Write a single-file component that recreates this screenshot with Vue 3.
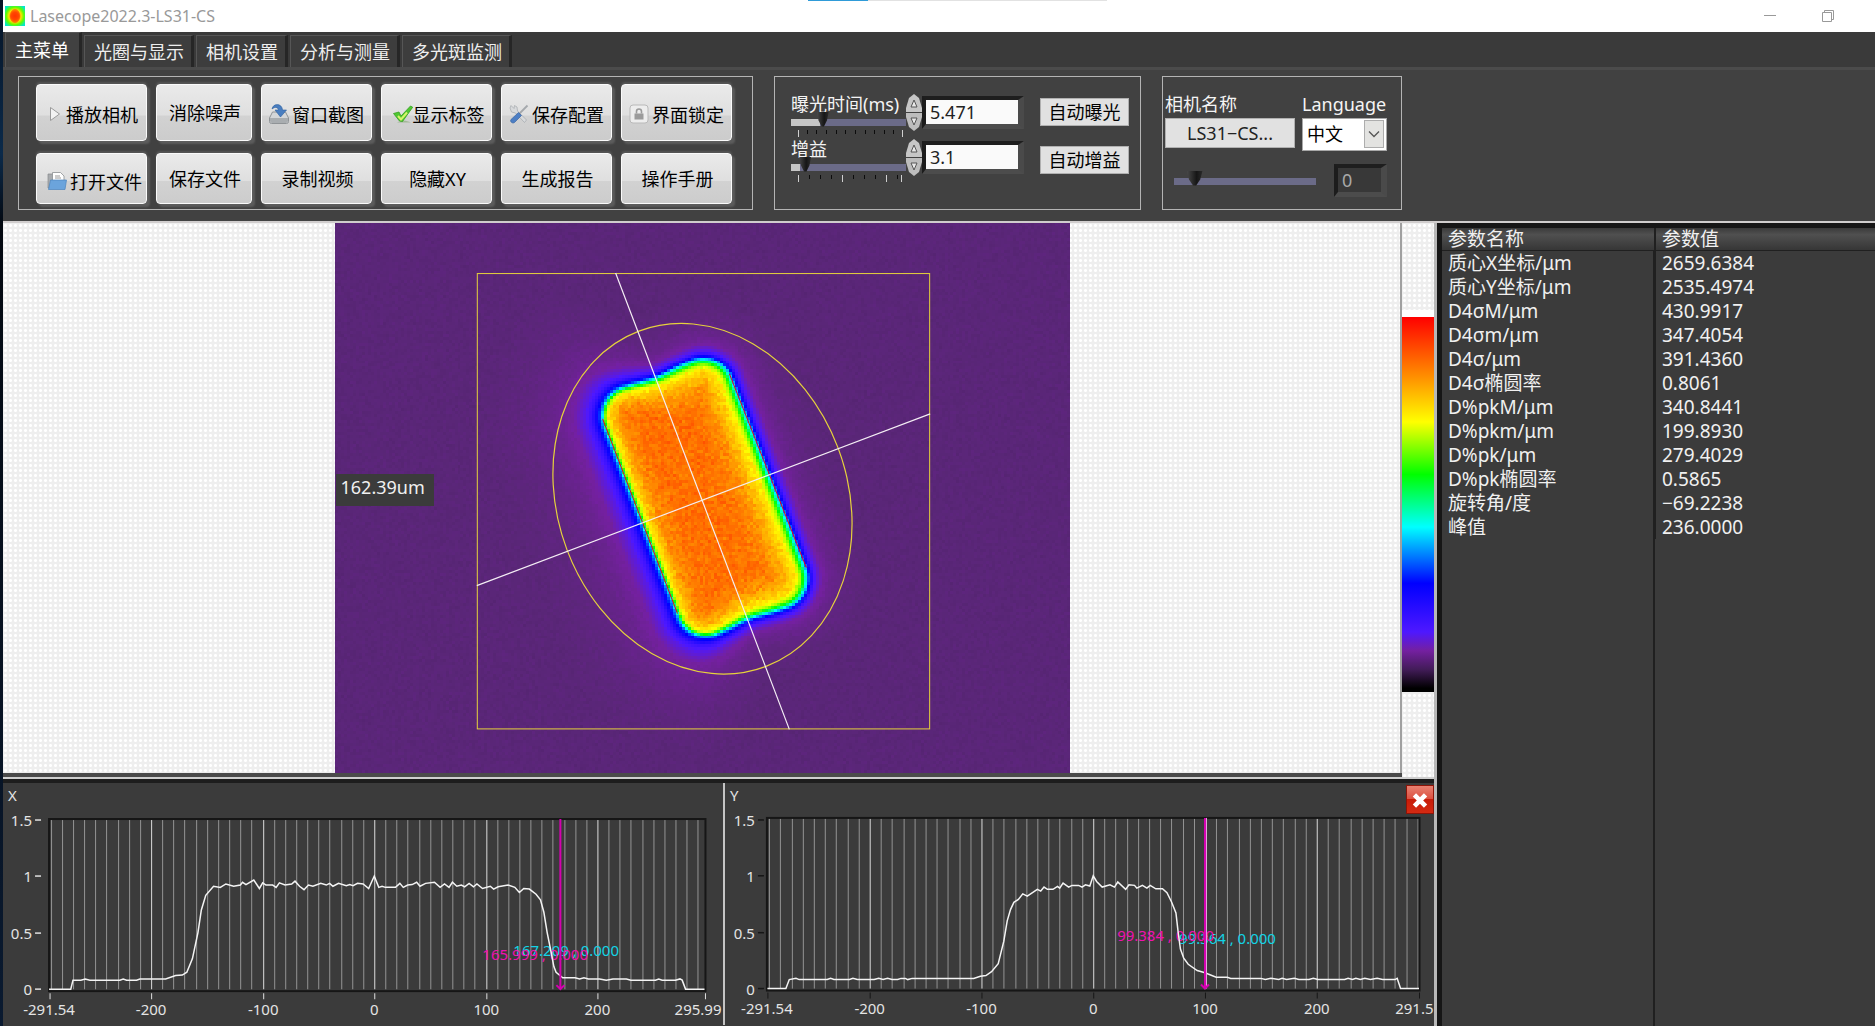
<script setup>
import { computed, onMounted, ref } from 'vue'

const tabs = ['主菜单', '光圈与显示', '相机设置', '分析与测量', '多光斑监测']
const activeTab = ref('主菜单')

const actions = [
  { label: '播放相机', icon: 'play' },
  { label: '消除噪声' },
  { label: '窗口截图', icon: 'capture' },
  { label: '显示标签', icon: 'check' },
  { label: '保存配置', icon: 'tools' },
  { label: '界面锁定', icon: 'lock' },
  { label: '打开文件', icon: 'folder' },
  { label: '保存文件' },
  { label: '录制视频' },
  { label: '隐藏XY' },
  { label: '生成报告' },
  { label: '操作手册' },
]

const controls = ref([
  {
    id: 'exposure',
    label: '曝光时间(ms)',
    value: '5.471',
    pos: 25,
    auto: '自动曝光',
    major: [7, 111],
    minor: [16, 25, 35, 45, 54, 64, 74, 83, 93, 102],
  },
  {
    id: 'gain',
    label: '增益',
    value: '3.1',
    pos: 8,
    auto: '自动增益',
    major: [7, 51, 95, 110],
    minor: [18, 29, 40, 62, 73, 84, 106],
  },
])
const language = ref('中文')
const cameraPos = ref(10)
const cameraValue = ref('0')

const params = [
  ['质心X坐标/μm', '2659.6384'],
  ['质心Y坐标/μm', '2535.4974'],
  ['D4σM/μm', '430.9917'],
  ['D4σm/μm', '347.4054'],
  ['D4σ/μm', '391.4360'],
  ['D4σ椭圆率', '0.8061'],
  ['D%pkM/μm', '340.8441'],
  ['D%pkm/μm', '199.8930'],
  ['D%pk/μm', '279.4029'],
  ['D%pk椭圆率', '0.5865'],
  ['旋转角/度', '−69.2238'],
  ['峰值', '236.0000'],
]

// ---- beam image ----
const CELL = 3
const COLS = 246
const ROWS = 184
const beam = ref(null)

// level -> rgb, same stops as the colour bar
const palette = [
  [0, 0, 0, 0],
  [0.06, 66, 28, 88],
  [0.083, 90, 38, 120],
  [0.107, 116, 32, 160],
  [0.16, 78, 24, 255],
  [0.285, 0, 0, 255],
  [0.437, 0, 255, 255],
  [0.576, 0, 255, 0],
  [0.72, 255, 255, 0],
  [0.84, 255, 144, 0],
  [1, 255, 0, 0],
]
// distance outside / inside the beam edge -> level
const outside = [
  [0, 0.38],
  [2, 0.28],
  [5, 0.19],
  [8, 0.15],
  [14, 0.108],
  [22, 0.096],
  [36, 0.088],
  [60, 0.083],
]
const inside = [
  [0, 0.38],
  [3, 0.54],
  [6, 0.67],
  [10, 0.74],
  [17, 0.79],
  [26, 0.84],
  [44, 0.875],
]

function lerp(stops, x) {
  if (x <= stops[0][0]) return stops[0].slice(1)
  for (let i = 1; i < stops.length; i++) {
    const a = stops[i - 1]
    const b = stops[i]
    if (x <= b[0]) {
      const k = (x - a[0]) / (b[0] - a[0])
      return a.slice(1).map((n, j) => n + (b[j + 1] - n) * k)
    }
  }
  return stops[stops.length - 1].slice(1)
}

function noise(seed) {
  let s = seed
  return () => {
    s = (s * 1664525 + 1013904223) >>> 0
    return s / 4294967296 - 0.5
  }
}

function level(x, y) {
  const dx = x - 368
  const dy = y - 276
  const u = dx * 0.362 + dy * 0.932
  const v = dx * 0.932 - dy * 0.362
  // short ends are slightly hollow in the middle
  const half = 133 - 3 * Math.exp(-((v / 22) ** 2))
  const r = 31
  const qx = Math.abs(v - 3) - (69 - r)
  const qy = Math.abs(u) - (half - r)
  const d = Math.hypot(Math.max(qx, 0), Math.max(qy, 0)) + Math.min(Math.max(qx, qy), 0) - r
  const side = Math.max(-1, Math.min(1, v / 68))
  if (d > 0) return lerp(outside, side < 0 ? d / (1 - side) : d)[0]
  return lerp(inside, side > 0 ? -d / (1 + side * 0.3) : -d * (1 - side * 0.6))[0]
}

onMounted(() => {
  const ctx = beam.value.getContext('2d')
  const img = ctx.createImageData(COLS, ROWS)
  const rnd = noise(31)
  for (let r = 0; r < ROWS; r++) {
    for (let c = 0; c < COLS; c++) {
      const base = level(c * CELL + 1, r * CELL + 1)
      const n = rnd() + rnd()
      const [R, G, B] = lerp(palette, base + n * (base > 0.7 ? 0.036 : 0.004))
      img.data.set([R, G, B, 255], (r * COLS + c) * 4)
    }
  }
  ctx.putImageData(img, 0, 0)
})

// ---- profile plots ----
const profileX = [
  -291.5, 0, -272, 0, -270, 0.08, -263, 0.08, -259, 0.09, -255, 0.08, -228, 0.08, -225, 0.09, -222, 0.08,
  -213, 0.08, -210, 0.09, -187, 0.09, -178, 0.12, -172, 0.125, -168, 0.15, -163, 0.27, -158, 0.5, -155, 0.7,
  -151, 0.83, -144, 0.91, -138, 0.9, -133, 0.93, -126, 0.91, -120, 0.92, -118, 0.945, -115, 0.925,
  -108, 0.965, -103, 0.89, -100, 0.94, -97, 0.92, -91, 0.92, -88, 0.9, -85, 0.94, -80, 0.92, -74, 0.93,
  -71, 0.955, -67, 0.91, -63, 0.88, -59, 0.92, -55, 0.91, -48, 0.935, -43, 0.92, -40, 0.935, -37, 0.91,
  -32, 0.935, -25, 0.915, -22, 0.925, -19, 0.915, -15, 0.935, -10, 0.93, -5, 0.89, 0, 1, 4, 0.9, 7, 0.91,
  10, 0.9, 19, 0.9, 23, 0.935, 26, 0.9, 30, 0.92, 34, 0.925, 38, 0.945, 41, 0.91, 46, 0.935, 54, 0.945,
  59, 0.9, 63, 0.93, 67, 0.9, 70, 0.945, 74, 0.91, 78, 0.92, 81, 0.905, 85, 0.935, 89, 0.905, 92, 0.93,
  97, 0.89, 104, 0.91, 107, 0.885, 111, 0.905, 120, 0.92, 126, 0.9, 130, 0.855, 134, 0.89, 139, 0.885,
  145, 0.84, 149, 0.79, 152, 0.68, 155, 0.5, 158, 0.35, 161, 0.2, 163, 0.15, 169, 0.1, 180, 0.1, 184, 0.09,
  188, 0.1, 192, 0.09, 202, 0.09, 208, 0.08, 214, 0.09, 226, 0.09, 230, 0.08, 252, 0.08, 255, 0.09,
  258, 0.08, 270, 0.08, 274, 0.09, 276, 0.08, 279, 0, 296, 0,
]
const profileY = [
  -291.5, 0, -275, 0, -272, 0.08, -266, 0.09, -263, 0.08, -238, 0.08, -235, 0.09, -232, 0.08, -218, 0.08,
  -215, 0.09, -211, 0.08, -196, 0.08, -192, 0.09, -188, 0.08, -184, 0.09, -180, 0.08, -175, 0.08,
  -172, 0.09, -168, 0.09, -166, 0.08, -162, 0.09, -107, 0.09, -101, 0.11, -96, 0.115, -91, 0.15,
  -85, 0.22, -80, 0.42, -77, 0.6, -74, 0.7, -71, 0.765, -67, 0.79, -63, 0.84, -59, 0.82, -50, 0.88,
  -47, 0.865, -44, 0.9, -41, 0.88, -36, 0.88, -32, 0.905, -30, 0.89, -27, 0.935, -22, 0.9, -19, 0.915,
  -13, 0.915, -10, 0.9, -7, 0.92, -3, 0.91, 0, 1, 3, 0.95, 8, 0.9, 15, 0.92, 19, 0.9, 22, 0.945, 29, 0.88,
  32, 0.92, 37, 0.915, 39, 0.89, 44, 0.915, 48, 0.89, 51, 0.915, 56, 0.885, 62, 0.885, 66, 0.85, 70, 0.77,
  74, 0.67, 76, 0.5, 78, 0.35, 81, 0.27, 85, 0.215, 93, 0.16, 100, 0.14, 110, 0.1, 120, 0.1, 123, 0.09,
  150, 0.09, 154, 0.08, 159, 0.09, 166, 0.08, 169, 0.09, 173, 0.08, 180, 0.09, 184, 0.08, 193, 0.08,
  197, 0.09, 201, 0.08, 225, 0.08, 228, 0.09, 232, 0.08, 235, 0.09, 239, 0.08, 243, 0.09, 248, 0.08,
  254, 0.09, 259, 0.08, 270, 0.08, 272, 0.09, 275, 0, 291.5, 0,
]

const plots = computed(() =>
  [
    {
      axis: 'X', w: 719, h: 241, left: 46, right: 702, zero: 371, scale: 1.115, top: 35, base: 205,
      points: profileX, last: '295.99', lastX: 718, labelX: 29, tick: '#e0e0e0', cursor: 557, glow: false,
      notes: [
        { text: '167.209 , 0.000', x: 510, y: 172, cls: 'cyan' },
        { text: '165.999 , 0.000', x: 479, y: 176, cls: 'pink' },
      ],
    },
    {
      axis: 'Y', w: 711, h: 241, left: 42, right: 696, zero: 369, scale: 1.12, top: 34, base: 205,
      points: profileY, last: '291.5', lastX: 710, labelX: 30, tick: '#161616', cursor: 481, glow: true,
      notes: [
        { text: '99.364 , 0.000', x: 455, y: 160, cls: 'cyan' },
        { text: '99.384 , 0.000', x: 393, y: 157, cls: 'pink' },
      ],
    },
  ].map((p) => {
    const px = (v) => p.zero + v * p.scale
    const py = (v) => p.base - v * 113
    const grid = []
    for (let v = -290; v <= 290; v += 10) grid.push({ x: Math.round(px(v)) + 0.5, major: v % 100 === 0 })
    const line = []
    for (let i = 0; i < p.points.length; i += 2) {
      line.push(`${px(p.points[i]).toFixed(1)},${py(p.points[i + 1]).toFixed(1)}`)
    }
    return {
      ...p,
      grid,
      line: line.join(' '),
      xTicks: [-200, -100, 0, 100, 200].map((v) => ({ v, x: Math.round(px(v)) })),
      yTicks: [0, 0.5, 1, 1.5].map((v) => ({ v, y: Math.round(py(v)) })),
    }
  }),
)
const showPlots = ref(true)
</script>

<template>
  <div class="app">
    <div class="window">
      <header class="titlebar">
        <svg class="logo" viewBox="0 0 20 20">
          <defs>
            <radialGradient id="logo-spot" cx="50%" cy="50%" r="62%">
              <stop offset="0" stop-color="#ff2a00" />
              <stop offset="0.3" stop-color="#ff5a00" />
              <stop offset="0.5" stop-color="#ffe000" />
              <stop offset="0.72" stop-color="#5cff00" />
              <stop offset="1" stop-color="#00e6d0" />
            </radialGradient>
          </defs>
          <rect width="20" height="20" fill="url(#logo-spot)" />
          <ellipse cx="10" cy="10" rx="5" ry="7" fill="#ff3c00" opacity="0.6" />
        </svg>
        <h1 class="title">Lasecope2022.3-LS31-CS</h1>
        <div class="progress"></div>
        <div class="win-buttons">
          <button class="win-btn" aria-label="最小化">
            <svg viewBox="0 0 12 12"><path d="M0 5.500h12" /></svg>
          </button>
          <button class="win-btn" aria-label="还原">
            <svg viewBox="0 0 12 12"><path d="M.5 2.500h9v9h-9zM2.500 2.500v-2h9v9h-2" /></svg>
          </button>
        </div>
      </header>

      <nav class="tabs">
        <button
          v-for="t in tabs"
          :key="t"
          class="tab"
          :class="{ on: activeTab === t }"
          @click="activeTab = t"
        >
          {{ t }}
        </button>
      </nav>

      <section class="ribbon">
        <div class="group actions">
          <button v-for="a in actions" :key="a.label" class="action" :class="a.icon && ['has-icon', a.icon]">
            <svg v-if="a.icon === 'play'" class="ico narrow" viewBox="0 0 12 20">
              <path d="M1.500 3.500v13l9-6.500z" fill="#f2f2f2" stroke="#9a9a9a" />
            </svg>
            <svg v-else-if="a.icon === 'capture'" class="ico" viewBox="0 0 20 20">
              <path d="M3.500 8h13l3 6v3.500q0 2-2 2h-15q-2 0-2-2V14z" fill="#d4d6d8" stroke="#8f9396" />
              <path d="M1 14h18v3q0 2-2 2H3q-2 0-2-2z" fill="#a9adb0" />
              <path d="M3 5C4-1 13-1 13.500 6H17.500L11.500 13 6 6h3.500C9 3 6 2.500 3 5z" fill="#4a7ec0" stroke="#2e5f9e" stroke-width=".6" />
            </svg>
            <svg v-else-if="a.icon === 'check'" class="ico" viewBox="0 0 20 20">
              <path d="M4 18.500c4-2.500 9-2.500 14 0z" fill="#8fae80" opacity=".7" />
              <path d="M.5 9.500L6 8l2 4L17.500 2l2.200 1.200L9.500 17.500 6.500 17z" fill="#4fc832" stroke="#35a01e" stroke-width=".8" />
              <path d="M5 12l3 3.500L14 8.500" fill="none" stroke="#d6f56a" stroke-width="2" />
            </svg>
            <svg v-else-if="a.icon === 'tools'" class="ico" viewBox="0 0 20 20">
              <path d="M2 1.500l3 3 .5-3L8 3l.5 4 9 9-2 2.500-9-9.500-4-1L1 4z" fill="#d8dadc" stroke="#a4a8ac" stroke-width=".7" />
              <path d="M18.500 1.500L10 10" stroke="#a4a8ac" stroke-width="1.800" />
              <path d="M9.500 8.500l3 3-7 7c-2 1.500-5-1-3.500-3z" fill="#4c7ec4" stroke="#2f5c9c" stroke-width=".6" />
            </svg>
            <svg v-else-if="a.icon === 'lock'" class="ico" viewBox="0 0 20 20">
              <rect x="1" y="1" width="18" height="18" rx="3" fill="#ededed" stroke="#b9b9b9" />
              <path d="M5.500 9.500h9v6h-9z" fill="#9b9b9b" />
              <path d="M7.500 9.500V7.500a2.500 2.500 0 0 1 5 0v2" fill="none" stroke="#9b9b9b" stroke-width="1.600" />
            </svg>
            <svg v-else-if="a.icon === 'folder'" class="ico" viewBox="0 0 20 20">
              <path d="M1 3h6l1 2v12H1z" fill="#a8abae" stroke="#86898c" stroke-width=".7" />
              <path d="M5.500 1.500h8l3.500 3.500v8H5.500z" fill="#fff" stroke="#8c8f92" stroke-width=".8" />
              <path d="M8 5h5M8 7h6" stroke="#999" />
              <path d="M3.500 9H19.500L18 18.500H1.500z" fill="#6ba4dc" stroke="#4c84bd" stroke-width=".7" />
            </svg>
            <span>{{ a.label }}</span>
          </button>
        </div>

        <div class="group exposure">
          <div v-for="c in controls" :key="c.id" class="control">
            <div class="slide">
              <label class="name" :for="c.id">{{ c.label }}</label>
              <input
                :id="c.id"
                v-model="c.pos"
                class="range filled"
                type="range"
                :style="{ '--fill': c.pos + '%' }"
              />
              <svg class="ticks" viewBox="0 0 116 7">
                <path v-for="m in c.minor" :key="m" :d="`M${m}.500 0v4`" stroke="#0c0c0c" />
                <path v-for="m in c.major" :key="m" :d="`M${m}.500 0v7`" stroke="#d0d0d0" />
              </svg>
            </div>
            <div class="spin">
              <button class="step" :aria-label="c.label + ' +'">
                <svg viewBox="0 0 16 18">
                  <path d="M8 0l5 4 3 10v4H0v-4L3 4z" fill="#c6c6c6" />
                  <path d="M8 6l3 7H5z" fill="#e8e8e8" stroke="#555" />
                </svg>
              </button>
              <button class="step" :aria-label="c.label + ' -'">
                <svg viewBox="0 0 16 18">
                  <path d="M8 18l5-4 3-10V0H0v4l3 10z" fill="#bdbdbd" />
                  <path d="M8 12l3-7H5z" fill="#e8e8e8" stroke="#555" />
                </svg>
              </button>
            </div>
            <input v-model="c.value" class="number" type="text" :aria-label="c.label" />
            <button class="flat">{{ c.auto }}</button>
          </div>
        </div>

        <div class="group camera">
          <div class="cam-name">
            <span class="name">相机名称</span>
            <button class="flat">LS31−CS...</button>
          </div>
          <div class="cam-lang">
            <label class="name" for="lang">Language</label>
            <div class="select-wrap">
              <select id="lang" v-model="language" class="select">
                <option>中文</option>
                <option>English</option>
              </select>
              <svg class="chevron" viewBox="0 0 20 28">
                <rect x=".5" y=".5" width="19" height="27" fill="#e3e3e1" stroke="#adadad" />
                <path d="M5 11.500l5 5 5-5" fill="none" stroke="#555" stroke-width="1.300" />
              </svg>
            </div>
          </div>
          <input v-model="cameraPos" class="range cam-range" type="range" aria-label="相机" />
          <input v-model="cameraValue" class="number dim" type="text" aria-label="相机值" />
        </div>
      </section>

      <main class="work">
        <div class="left">
          <div class="view">
            <div class="graph">
              <div class="stage">
                <canvas ref="beam" class="beam" :width="COLS" :height="ROWS"></canvas>
                <svg class="overlay" viewBox="0 0 737 551">
                  <path d="M268 196L343 391M395 151L472 345" stroke="#f00018" />
                  <rect x="142.500" y="50.500" width="453" height="456" fill="none" stroke="#e6d23c" />
                  <ellipse
                    rx="179.500"
                    ry="145"
                    transform="translate(368 276) rotate(69.22)"
                    fill="none"
                    stroke="#e6d23c"
                    stroke-width="1.200"
                  />
                  <path d="M281 50L455 507M142 363L596 191" stroke="#f4eef4" stroke-width="1.200" />
                </svg>
                <div class="measure">162.39um</div>
              </div>
            </div>
            <div class="bar-col">
              <div class="color-bar"></div>
            </div>
          </div>

          <div v-if="showPlots" class="plots">
            <div v-for="p in plots" :key="p.axis" class="plot">
              <svg class="plot-svg" :viewBox="`0 -1 ${p.w} ${p.h}`">
                <text x="5" y="17">{{ p.axis }}</text>
                <path
                  v-for="g in p.grid"
                  :key="g.x"
                  :d="`M${g.x} ${p.top}V${p.base}`"
                  :class="g.major ? 'major' : 'minor'"
                />
                <rect
                  :x="p.left"
                  :y="p.top"
                  :width="p.right - p.left"
                  :height="p.base - p.top + 2"
                  class="frame"
                />
                <text v-for="n in p.notes" :key="n.text" :x="n.x" :y="n.y" :class="n.cls">{{ n.text }}</text>
                <polyline :points="p.line" class="curve" />
                <path v-if="p.glow" :d="`M${p.cursor + 1.5} ${p.top}V${p.base}`" stroke="#e8a8e0" />
                <path
                  :d="`M${p.cursor} ${p.top}V${p.base}m-4 -4l4 4l4 -4`"
                  class="cursor"
                />
                <g v-for="t in p.yTicks" :key="'y' + t.v">
                  <text :x="p.labelX" :y="t.y + 6" text-anchor="end">{{ t.v }}</text>
                  <path :d="`M${p.labelX + 3} ${t.y}h6`" :stroke="p.tick" stroke-width="1.500" />
                </g>
                <g v-for="t in p.xTicks" :key="'x' + t.v">
                  <path :d="`M${t.x + 0.5} 209v6`" :stroke="p.tick" />
                  <text :x="t.x" y="231" text-anchor="middle">{{ t.v }}</text>
                </g>
                <path :d="`M${p.left + 1} 209v6M${p.right} 209v6`" :stroke="p.tick" />
                <text :x="p.left" y="231" text-anchor="middle">-291.54</text>
                <text :x="p.lastX" y="231" text-anchor="end">{{ p.last }}</text>
              </svg>
            </div>
            <button class="close" aria-label="关闭" @click="showPlots = false">
              <svg viewBox="0 0 28 29">
                <path d="M8 8.500l12 12M20 8.500l-12 12" stroke="#fff" stroke-width="5" />
              </svg>
            </button>
          </div>
        </div>

        <aside class="params">
          <table class="table">
            <thead>
              <tr>
                <th>参数名称</th>
                <th>参数值</th>
              </tr>
            </thead>
            <tbody>
              <tr v-for="[name, value] in params" :key="name">
                <td>{{ name }}</td>
                <td>{{ value }}</td>
              </tr>
            </tbody>
          </table>
        </aside>
      </main>
    </div>
  </div>
</template>

<style>
body {
  margin: 0;
  background: #3b3b3b;
}
</style>

<style scoped>
.app {
  box-sizing: border-box;
  min-height: 100vh;
  padding-left: 3px;
  background: linear-gradient(#061426, #0b2a4a 15%, #030810 22%, #0a1a30);
  font-family: 'Noto Sans', 'Noto Sans CJK SC', sans-serif;
  font-size: 18px;
  color: #f0f0f0;
}
.app * {
  box-sizing: border-box;
}
.window {
  display: flex;
  flex-direction: column;
  min-height: 100vh;
  background: #3b3b3b;
}
button,
input,
select {
  font: inherit;
  margin: 0;
}
button {
  padding: 0;
  border: 0;
  cursor: pointer;
}

/* title bar */
.titlebar {
  position: relative;
  display: flex;
  align-items: center;
  height: 32px;
  padding: 0 41px 0 2px;
  background: #fff;
}
.logo {
  width: 20px;
  height: 20px;
}
.title {
  margin: 0 auto 0 5px;
  font-size: 16px;
  font-weight: 400;
  color: #999;
}
.progress {
  position: absolute;
  top: 0;
  left: 43%;
  width: 16%;
  height: 1px;
  background: linear-gradient(90deg, #2f9bd8 20%, #e2e2e2 20%);
}
.win-buttons {
  display: flex;
  gap: 46px;
}
.win-btn {
  width: 12px;
  height: 12px;
  background: none;
}
.win-btn svg {
  display: block;
  fill: none;
  stroke: #999;
}

/* tabs */
.tabs {
  display: flex;
  align-items: flex-end;
  gap: 2px;
  height: 35px;
  padding-left: 2px;
  background: #3a3a3a;
}
.tab {
  height: 32px;
  padding: 0 7px 0 9px;
  border: solid;
  border-width: 1px 3px 0 1px;
  border-color: #565656 #262626 #565656 #565656;
  background: #3d3d3d;
  color: #eee;
  line-height: 28px;
}
.tab.on {
  height: 35px;
  padding: 0 10px 0 9px;
  background: #414141;
  color: #fff;
  line-height: 30px;
}

/* ribbon */
.ribbon {
  display: flex;
  align-items: flex-start;
  height: 156px;
  padding: 6px 15px 0;
  border-top: 3px solid #4b4b4b;
  border-bottom: 2px solid #d0cdcd;
  background: #414141;
}
.group {
  height: 134px;
  border: 1px solid #b4b4b4;
}
.actions {
  display: grid;
  grid-template-columns: 111px 96px repeat(4, 111px);
  grid-template-rows: 57px 51px;
  gap: 12px 9px;
  padding: 7px 20px 0 17px;
}
.action {
  display: flex;
  align-items: center;
  justify-content: center;
  gap: 3px;
  padding: 0 0 2px 2px;
  border: 1px solid #fafafa;
  border-radius: 4px;
  background: linear-gradient(#eaeaea, #dfdfdf 55%, #d2d2d2 56%, #cccccc);
  box-shadow: 3px 3px 2px #5c5c5c, 0 -2px 2px #565656;
  color: #000;
}
.action.has-icon {
  padding: 2px 0 0;
}
.action.play {
  gap: 5px;
  padding-left: 4px;
}
.action.check {
  gap: 0;
  padding-left: 4px;
}
.action.folder {
  padding: 4px 0 0 6px;
}
.ico {
  width: 20px;
  height: 20px;
}
.ico.narrow {
  width: 12px;
}
.name {
  display: block;
  height: 24px;
  line-height: 20px;
  white-space: nowrap;
  color: #f4f4f4;
}
.exposure {
  margin-left: 21px;
  padding: 17px 9px 0 16px;
}
.control {
  display: grid;
  grid-template-columns: 115px 16px 102px 107px;
  align-items: start;
  height: 45px;
}
.slide {
  display: flex;
  flex-direction: column;
}
.range {
  appearance: none;
  width: 100%;
  height: 16px;
  margin: -7px 0 3px;
  background: linear-gradient(#6b6b88, #6b6b88) 0 8px / 100% 7px no-repeat;
}
.range.filled {
  background: linear-gradient(90deg, #c6c6c6 var(--fill), #6b6b88 var(--fill)) 0 8px / 100% 7px no-repeat;
}
.range::-webkit-slider-thumb {
  appearance: none;
  width: 12px;
  height: 15px;
  background: linear-gradient(90deg, #484848, #161616 60%, #2c2c2c);
  clip-path: polygon(0 0, 100% 0, 85% 60%, 60% 100%, 40% 100%, 15% 60%);
}
.ticks {
  display: block;
  width: 116px;
  height: 7px;
}
.spin {
  display: flex;
  flex-direction: column;
  gap: 1px;
}
.step {
  height: 18px;
  background: none;
}
.step svg {
  display: block;
  width: 16px;
  height: 18px;
}
.number {
  width: 102px;
  height: 33px;
  margin-top: 2px;
  padding: 0 4px;
  border: solid;
  border-width: 4px 6px 5px 4px;
  border-color: #1e1e1e #4a4a4a #4c4c4c #1c1c1c;
  background: #fafafa;
  color: #222;
}
.flat {
  height: 28px;
  margin-top: 4px;
  margin-left: 16px;
  border: 1px solid #b0b0b0;
  background: #e1e1e1;
  color: #000;
  line-height: 24px;
  white-space: nowrap;
}
.control .flat {
  width: 89px;
}
.control + .control .flat {
  margin-top: 7px;
}
.camera {
  display: grid;
  grid-template-columns: 130px 85px;
  grid-template-rows: 57px 33px;
  gap: 13px 7px;
  width: 240px;
  margin-left: 21px;
  padding: 17px 14px 0 2px;
}
.camera .flat {
  width: 130px;
  height: 30px;
  margin: 0;
  color: #222;
}
.select-wrap {
  position: relative;
}
.select {
  display: block;
  appearance: none;
  width: 85px;
  height: 33px;
  padding: 0 4px 2px;
  border: 1px solid #a8a8a8;
  border-radius: 0;
  background: #fff;
  color: #000;
}
.chevron {
  position: absolute;
  top: 2px;
  right: 3px;
  width: 20px;
  height: 28px;
  pointer-events: none;
}
.cam-range {
  width: 142px;
  margin: 6px 0 0 9px;
}
.cam-range::-webkit-slider-thumb {
  width: 16px;
}
.number.dim {
  justify-self: end;
  width: 53px;
  margin: 0;
  background: #383838;
  color: #a8a8a8;
}

/* work area */
.work {
  display: grid;
  flex: 1;
  grid-template-columns: minmax(0, 1fr) 438px;
}
.left {
  border-right: 3px solid #b8b8b8;
}
.view {
  display: grid;
  grid-template-columns: minmax(0, 1fr) 32px;
  border-bottom: 2px solid #d0d0d0;
  background: #4b4b4b;
}
.graph,
.bar-col {
  background-color: #eeeeee;
  background-image: radial-gradient(circle, #fff 1px, transparent 2px);
  background-size: 5px 5px;
}
.graph {
  display: grid;
  grid-template-columns: 332fr 737fr 330fr;
  margin-bottom: 4px;
  border-right: 2px solid #a0a0a0;
}
.stage {
  position: relative;
  grid-column: 2;
}
.beam {
  display: block;
  width: 100%;
  height: auto;
  image-rendering: pixelated;
}
.overlay {
  position: absolute;
  inset: 0;
  width: 100%;
  height: 100%;
}
.measure {
  position: absolute;
  top: 45.6%;
  left: 1px;
  padding: 0 9px 6px 5px;
  background: #3b3b3b;
  line-height: 26px;
}
.bar-col {
  padding-top: 87px;
}
.color-bar {
  height: 382px;
  border-top: 7px solid #fff;
  background: linear-gradient(
    #f00 0%,
    #ff9000 16%,
    #ff0 28%,
    #0f0 42%,
    #0ff 56%,
    #00f 71%,
    #4e18ff 84%,
    #7420a0 89%,
    #421c58 94%,
    #000 99%
  );
}
.plots {
  position: relative;
  display: grid;
  grid-template-columns: 719fr 711fr;
  border-top: 4px solid #1d1d1d;
  background: #3b3b3b;
}
.plot + .plot {
  border-left: 2px solid #c4c4c4;
}
.plot-svg {
  display: block;
  width: 100%;
  font-size: 15px;
}
.plot-svg text {
  fill: #e4e4e4;
}
.minor {
  stroke: #949494;
}
.major {
  stroke: #dcdcdc;
}
.frame {
  fill: none;
  stroke: #161616;
  stroke-width: 2;
}
.curve {
  fill: none;
  stroke: #f4f4f4;
  stroke-width: 1.5;
}
.cursor {
  fill: none;
  stroke: #d400b0;
  stroke-width: 2;
}
.plot-svg .pink {
  fill: #f010b0;
}
.plot-svg .cyan {
  fill: #12d4e6;
}
.close {
  position: absolute;
  top: 2px;
  right: 0;
  width: 28px;
  height: 29px;
  border: 1px solid #8c1408;
  background: linear-gradient(#e88070, #dc5040 48%, #c81c08 50%, #d42a12);
}
.close svg {
  display: block;
}

/* parameters */
.params {
  padding-left: 5px;
  border-top: 5px solid #161616;
  background: linear-gradient(90deg, #161616 5px, transparent 5px),
    linear-gradient(90deg, transparent 216px, #202020 216px, #202020 218px, transparent 218px), #3b3b3b;
}
.table {
  width: 100%;
  border-collapse: collapse;
  table-layout: fixed;
  font-size: 19px;
}
.table th,
.table td {
  height: 24px;
  padding: 0 0 0 6px;
  line-height: 24px;
  font-weight: 400;
  text-align: left;
  white-space: nowrap;
}
.table th:first-child,
.table td:first-child {
  width: 213px;
  border-right: 2px solid #202020;
}
.table th {
  height: 22px;
  line-height: 22px;
  background: linear-gradient(#3a3a3a, #505050 30%, #363636);
  border-bottom: 1px solid #202020;
}
</style>
